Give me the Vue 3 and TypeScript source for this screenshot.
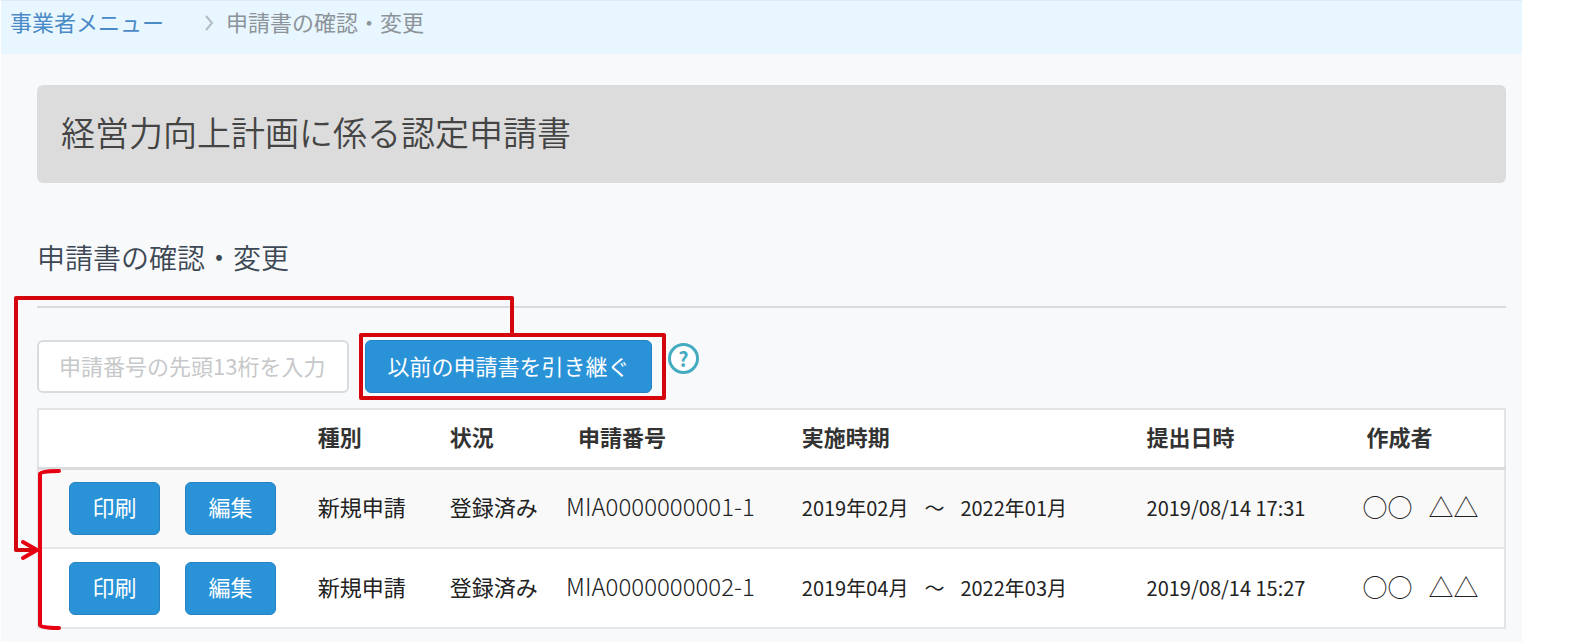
<script setup lang="ts">
import { ref } from 'vue'

interface Application {
  type: string
  status: string
  number: string
  from: string
  to: string
  submitted: string
}

const applications: Application[] = [
  { type: '新規申請', status: '登録済み', number: 'MIA0000000001-1', from: '2019年02月', to: '2022年01月', submitted: '2019/08/14 17:31' },
  { type: '新規申請', status: '登録済み', number: 'MIA0000000002-1', from: '2019年04月', to: '2022年03月', submitted: '2019/08/14 15:27' },
]

const previousNumber = ref('')
</script>

<template>
  <div class="page">
    <nav class="breadcrumb">
      <a href="#">事業者メニュー</a>
      <svg class="chevron" viewBox="0 0 10 18" aria-hidden="true"><path d="M2 2 L8 9 L2 16" /></svg>
      <span>申請書の確認・変更</span>
    </nav>

    <main class="content">
      <h1 class="title">経営力向上計画に係る認定申請書</h1>
      <h2 class="subtitle">申請書の確認・変更</h2>

      <form class="toolbar" @submit.prevent>
        <input v-model="previousNumber" type="text" aria-label="申請番号" placeholder="申請番号の先頭13桁を入力" />
        <button class="btn inherit" type="submit">以前の申請書を引き継ぐ</button>
        <button class="help" type="button" aria-label="ヘルプ">?</button>
      </form>

      <table class="list">
        <colgroup>
          <col class="c-actions" />
          <col class="c-type" />
          <col class="c-status" />
          <col class="c-number" />
          <col class="c-period" />
          <col class="c-date" />
          <col class="c-author" />
        </colgroup>
        <thead>
          <tr>
            <th></th>
            <th>種別</th>
            <th>状況</th>
            <th class="indent">申請番号</th>
            <th>実施時期</th>
            <th>提出日時</th>
            <th>作成者</th>
          </tr>
        </thead>
        <tbody>
          <tr v-for="a in applications" :key="a.number">
            <td class="tools">
              <div class="actions">
                <button class="btn" type="button">印刷</button>
                <button class="btn" type="button">編集</button>
              </div>
            </td>
            <td>{{ a.type }}</td>
            <td>{{ a.status }}</td>
            <td class="number">{{ a.number }}</td>
            <td class="date"><div class="period"><span>{{ a.from }}</span><span>～</span><span>{{ a.to }}</span></div></td>
            <td class="date">{{ a.submitted }}</td>
            <td><div class="author"><span>○○</span><span>△△</span></div></td>
          </tr>
        </tbody>
      </table>
    </main>

    <svg class="callout" width="670" height="640" aria-hidden="true">
      <rect x="360" y="335" width="303" height="63" />
      <path d="M511 334 V298 H15 V550 H32" />
      <path class="bright" d="M22 542 L36 550 L22 558" />
      <path class="bright" d="M58 471 Q39 471 39 474 V625 Q39 628 58 628" />
    </svg>
  </div>
</template>

<style>
body {
  background: #fff;
}
</style>

<style scoped>
.page {
  position: relative;
  margin: 0 54px 0 1px;
  padding-bottom: 13px;
  background: #f7f9fb;
  color: #333;
  font-family: "Noto Sans CJK JP", sans-serif;
  font-size: 22px;
  line-height: 32px;
}

.page * {
  box-sizing: border-box;
}

button,
input {
  font: inherit;
}

.breadcrumb {
  display: flex;
  align-items: center;
  height: 54px;
  padding: 0 9px 14px;
  border-top: 1px solid #dfeaf2;
  background: #e8f6ff;
  color: #8d9499;
}

.breadcrumb a {
  color: #4a8ac6;
  text-decoration: none;
}

.chevron {
  width: 10px;
  height: 18px;
  margin: 4px 12px 0 40px;
  fill: none;
  stroke: #b4bcc2;
  stroke-width: 2;
}

.content {
  padding: 31px 16px 0 36px;
}

.title {
  margin: 0;
  padding: 22px 24px 26px;
  border-radius: 6px;
  background: #dcdcdc;
  color: #444;
  font-size: 34px;
  font-weight: 350;
  line-height: 50px;
}

.subtitle {
  margin: 54px 0 32px;
  padding-bottom: 29px;
  border-bottom: 2px solid #d8dbde;
  color: #3d4854;
  font-size: 28px;
  font-weight: 350;
  line-height: 40px;
}

.toolbar {
  display: flex;
  margin-bottom: 15px;
}

.toolbar input {
  width: 312px;
  height: 53px;
  padding: 0 20px 4px;
  border: 2px solid #d9dcdf;
  border-radius: 6px;
  background: #fff;
  color: #333;
}

.toolbar input::placeholder {
  color: #c6c8ca;
  opacity: 1;
}

.btn {
  height: 53px;
  width: 91px;
  padding: 0 0 4px;
  border: 1px solid #2583c3;
  border-radius: 6px;
  background: #2a93d8;
  color: #fff;
}

.inherit {
  width: 287px;
  margin-left: 16px;
}

.help {
  width: 31px;
  height: 31px;
  margin: 3px 0 0 16px;
  padding: 0;
  border: 3px solid #45abc1;
  border-radius: 50%;
  background: #fff;
  color: #45abc1;
  font-size: 20px;
  font-weight: 700;
  line-height: 24px;
}

.list {
  width: 100%;
  border: 2px solid #e2e5e8;
  border-collapse: collapse;
  table-layout: fixed;
  background: #fff;
}

.c-actions { width: 19%; }
.c-type { width: 9%; }
.c-status { width: 8%; }
.c-number { width: 16%; }
.c-period { width: 23.5%; }
.c-date { width: 15%; }
.c-author { width: 9.5%; }

th,
td {
  padding: 0 0 4px 1px;
  text-align: left;
  white-space: nowrap;
}

th {
  height: 59px;
  border-bottom: 3px solid #d9dbdd;
  font-weight: 700;
}

th.indent {
  padding-left: 12px;
}

td {
  height: 80px;
  border-bottom: 2px solid #e4e6e8;
  color: #222;
}

.tools {
  padding-bottom: 0;
}

tbody tr:nth-child(odd) {
  background: #f9f9f9;
}

.actions {
  display: flex;
  gap: 25px;
  padding-left: 29px;
}

.number {
  padding-left: 0;
  font-size: 24px;
  font-weight: 300;
}

.date {
  padding-bottom: 0;
  font-size: 20px;
}

.period {
  display: flex;
  gap: 16px;
}

.author {
  display: flex;
  gap: 16px;
  margin-left: -4px;
  font-size: 25px;
  font-weight: 350;
}

.callout {
  position: absolute;
  top: 0;
  left: 0;
  fill: none;
  stroke: #d4050d;
  stroke-width: 4;
  stroke-linejoin: round;
  pointer-events: none;
}

.callout .bright {
  stroke: #e60012;
  stroke-linecap: round;
}
</style>
